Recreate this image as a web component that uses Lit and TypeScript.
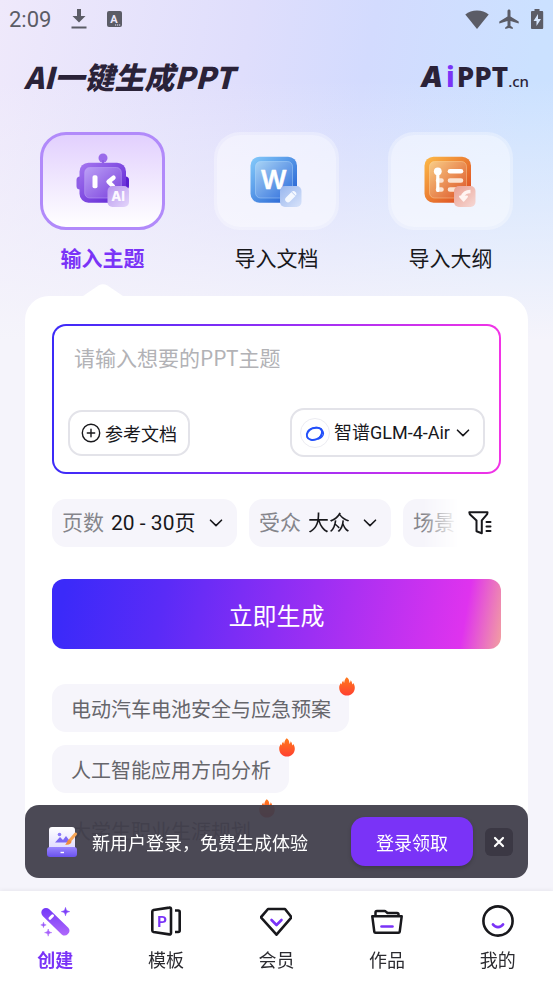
import { LitElement, html, css, svg } from "lit";
import { customElement, state } from "lit/decorators.js";
import { classMap } from "lit/directives/class-map.js";

const chevron = html`<svg class="chevron" width="14" height="8" viewBox="0 0 14 8" aria-hidden="true">
  <path d="M1.5 1.2 7 6.6l5.5-5.4" fill="none" stroke="currentColor" stroke-width="1.6" stroke-linecap="round" stroke-linejoin="round" />
</svg>`;

const flame = html`<svg class="flame" width="16" height="19" viewBox="0 0 16 19" aria-hidden="true">
  <defs>
    <linearGradient id="fl" x1="0" y1="0" x2="0" y2="1">
      <stop offset="0" stop-color="#ff7a1c" /><stop offset="1" stop-color="#ff4030" />
    </linearGradient>
  </defs>
  <path fill="url(#fl)" d="M7.700.3c1.900 1.300 2.700 3.100 2.700 5.700.8-.6 1.200-1.500 1.300-2.700 1.100 1.300 1.500 2.700 1.400 4.200.6-.3.900-.8 1-1.400C15.300 7.600 15.800 9 15.800 10.700c0 4.400-3.400 7.800-7.800 7.800S.2 15.100.2 10.700C.2 9 .8 7.500 2 6.100c0 .6.300 1.100.800 1.400C2.700 5.900 3.200 4.500 4.300 3.400c0 1.100.3 1.800.9 2.300C5.500 3.200 6.300 1.500 7.700.3Z" />
</svg>`;

const topicIcon = svg`
  <defs>
    <linearGradient id="t1" x1="0" y1="0" x2="1" y2="1"><stop offset="0" stop-color="#a678f0"/><stop offset="1" stop-color="#5a1fd2"/></linearGradient>
    <linearGradient id="t2" x1="0" y1="0" x2="1" y2="1"><stop offset="0" stop-color="#bba0f6"/><stop offset="1" stop-color="#7a40dc"/></linearGradient>
    <linearGradient id="t3" x1="0" y1="0" x2="1" y2="1"><stop offset="0" stop-color="#b795ee"/><stop offset="1" stop-color="#e4d6fb"/></linearGradient>
  </defs>
  <circle cx="28" cy="5" r="4.500" fill="#9a6bea"/>
  <rect x="27" y="7" width="2" height="4" fill="#8f5fe4"/>
  <rect x="1.500" y="23.500" width="8" height="13" rx="3.500" fill="#8f5ee6"/>
  <rect x="46" y="23.500" width="8" height="13" rx="3.500" fill="#5a1fd0"/>
  <rect x="4.500" y="9.700" width="46.500" height="40" rx="9" fill="url(#t1)"/>
  <rect x="9.700" y="14.500" width="36.600" height="30.500" rx="5" fill="url(#t2)" stroke="#c2a8f8" stroke-opacity=".5"/>
  <rect x="17.500" y="22.300" width="5" height="13" rx="1.800" fill="#fff"/>
  <path d="M38.500 24.700 33.500 28.700l4.500 4.500" fill="none" stroke="#fff" stroke-width="4.400" stroke-linecap="round" stroke-linejoin="round"/>
  <rect x="32.500" y="33" width="21.500" height="21" rx="5" fill="url(#t3)"/>
  <text x="43" y="48.300" text-anchor="middle" class="badge-text">AI</text>`;

const docIcon = svg`
  <defs>
    <linearGradient id="d1" x1="0" y1="0" x2="1" y2="1"><stop offset="0" stop-color="#86ccfb"/><stop offset="1" stop-color="#1d58cf"/></linearGradient>
    <linearGradient id="d2" x1="0" y1="0" x2="1" y2="1"><stop offset="0" stop-color="#a8d3f5"/><stop offset="1" stop-color="#2e6ddc"/></linearGradient>
    <linearGradient id="d3" x1="0" y1="0" x2="1" y2="1"><stop offset="0" stop-color="#98b6ee"/><stop offset="1" stop-color="#d8e3fa"/></linearGradient>
  </defs>
  <rect x="1.500" y="3.700" width="46.500" height="46" rx="9" fill="url(#d1)"/>
  <rect x="6.500" y="8.500" width="37" height="36.500" rx="5" fill="url(#d2)" stroke="#bfe0ff" stroke-opacity=".4"/>
  <text x="24.800" y="35.500" text-anchor="middle" class="doc-text">W</text>
  <rect x="31" y="33" width="21.500" height="21" rx="5" fill="url(#d3)"/>
  <path d="m39 46.500 5.500-5.500" stroke="#f4f8ff" stroke-width="5.600" stroke-linecap="round"/>
  <path d="m42.500 38.800 4 4" stroke="#b9cdf3" stroke-width="1"/>`;

const outlineIcon = svg`
  <defs>
    <linearGradient id="o1" x1="0" y1="0" x2="1" y2="1"><stop offset="0" stop-color="#fdbb48"/><stop offset="1" stop-color="#d9401d"/></linearGradient>
    <linearGradient id="o2" x1="0" y1="0" x2="1" y2="1"><stop offset="0" stop-color="#f8cc86"/><stop offset="1" stop-color="#dd5426"/></linearGradient>
    <linearGradient id="o3" x1="0" y1="0" x2="1" y2="1"><stop offset="0" stop-color="#ea9f90"/><stop offset="1" stop-color="#f6d9d6"/></linearGradient>
  </defs>
  <rect x="1.500" y="3.700" width="46.500" height="46" rx="9" fill="url(#o1)"/>
  <rect x="6.500" y="8.500" width="37" height="36.500" rx="5" fill="url(#o2)" stroke="#ffe0b0" stroke-opacity=".4"/>
  <path d="M15 27.500h3.500M15 36.500h3.500M27 27.500h11M27 36.500h8" stroke="#fbe3d2" stroke-width="4.600" stroke-linecap="round"/>
  <path d="M27 18.300h11" stroke="#fff" stroke-width="4.600" stroke-linecap="round"/>
  <path d="M14.800 19v18.500" stroke="#fff" stroke-width="3.200" stroke-linecap="round"/>
  <circle cx="14.800" cy="18.300" r="3.900" fill="#fff"/>
  <rect x="31" y="33" width="21.500" height="21" rx="5" fill="url(#o3)"/>
  <path d="M47.500 38.500c-4 0-7 1.500-8 5.500" fill="none" stroke="#fff4f1" stroke-width="3.400" stroke-linecap="butt"/>
  <path d="M37 43.500h7l-3.400 4.200Z" fill="#fff4f1" stroke="#fff4f1" stroke-width="2" stroke-linejoin="round"/>`;

const navIcons = {
  create: svg`
    <defs><linearGradient id="n1" gradientUnits="userSpaceOnUse" x1="0" y1="2" x2="0" y2="31"><stop offset="0" stop-color="#7136f8"/><stop offset="1" stop-color="#b069fb"/></linearGradient></defs>
    <g fill="url(#n1)" stroke="url(#n1)">
      <path d="M3.700 4.300a4.600 4.600 0 0 1 6.600 0l19 18.500a4.700 4.700 0 0 1-6.600 6.600l-19-18.500a4.600 4.600 0 0 1 0-6.600Z" stroke="none"/>
      <path d="M26.500 2.500c.5 2.800 1.300 3.600 4.100 4.100-2.800.5-3.600 1.300-4.100 4.100-.5-2.800-1.300-3.600-4.100-4.100 2.800-.5 3.600-1.300 4.100-4.100Z" stroke-width=".6"/>
      <path d="M4.500 17.200c.3 1.800.9 2.400 2.700 2.700-1.800.3-2.400.9-2.700 2.700-.3-1.800-.9-2.400-2.700-2.700 1.800-.3 2.400-.9 2.700-2.700Z" stroke-width=".5"/>
      <path d="M9.200 24c.4 2.400 1.200 3.200 3.600 3.600-2.400.4-3.200 1.200-3.600 3.600-.4-2.400-1.200-3.200-3.600-3.600 2.400-.4 3.200-1.200 3.600-3.600Z" stroke-width=".5"/>
    </g>
    <path d="m11 13.300 2.500-2.500" stroke="#fff" stroke-width="3" stroke-linecap="round"/>`,
  template: svg`
    <path d="M2.300 6.500c0-.8.500-1.300 1.300-1.500L19.300 2.600c1-.2 1.700.4 1.700 1.300v24.200c0 .9-.7 1.500-1.700 1.300L3.600 27c-.8-.2-1.300-.7-1.300-1.500ZM25 5.500h3.200c1 0 1.500.6 1.500 1.500v18.500c0 .9-.5 1.500-1.500 1.500H25" fill="none" stroke="#18181c" stroke-width="2.600" stroke-linejoin="round"/>
    <text x="12" y="21.500" text-anchor="middle" class="nav-p">P</text>`,
  member: svg`
    <path d="M8 4h17l6.500 8.300L16.500 29.700 .9 12.300Z" fill="none" stroke="#18181c" stroke-width="2.600" stroke-linejoin="round"/>
    <path d="m11.500 15 5 5 5-5" fill="none" stroke="#7a33f7" stroke-width="2.600" stroke-linecap="round" stroke-linejoin="round"/>`,
  works: svg`
    <path d="M1.300 11.300h29.400l-2 15.500c-.1.700-.5 1-1.200 1h-23c-.7 0-1.100-.3-1.200-1ZM4.500 11V7.500c0-1 .5-1.500 1.500-1.500h7.500c.6 0 1 .2 1.400.6L16.500 8H26c1 0 1.500.5 1.500 1.500V11" fill="none" stroke="#18181c" stroke-width="2.500" stroke-linejoin="round"/>
    <path d="M10.500 21.500h11" stroke="#7a33f7" stroke-width="2.600" stroke-linecap="round"/>`,
  mine: svg`
    <circle cx="16" cy="16" r="14.600" fill="none" stroke="#18181c" stroke-width="2.600"/>
    <path d="M11 19.500c2.500 3.400 7.500 3.400 10 0" fill="none" stroke="#7a33f7" stroke-width="2.800" stroke-linecap="round"/>`,
};

const TABS = [
  { id: "topic", label: "输入主题", icon: topicIcon },
  { id: "doc", label: "导入文档", icon: docIcon },
  { id: "outline", label: "导入大纲", icon: outlineIcon },
];

const FILTERS = [
  { id: "pages", name: "页数", value: "20 - 30页" },
  { id: "audience", name: "受众", value: "大众" },
  { id: "scene", name: "场景", value: "" },
];

const TOPICS = ["电动汽车电池安全与应急预案", "人工智能应用方向分析", "大学生职业生涯规划"];

const NAV = [
  { id: "create", label: "创建", icon: navIcons.create },
  { id: "template", label: "模板", icon: navIcons.template },
  { id: "member", label: "会员", icon: navIcons.member },
  { id: "works", label: "作品", icon: navIcons.works },
  { id: "mine", label: "我的", icon: navIcons.mine },
];

@customElement("app-root")
export class AppRoot extends LitElement {
  @state() private tab = "topic";
  @state() private page = "create";
  @state() private bannerOpen = true;

  static styles = css`
    :host {
      display: block;
      box-sizing: border-box;
      min-height: 100vh;
      padding-bottom: 108px;
      color: #18181c;
      font-family: Roboto, "Noto Sans CJK SC", sans-serif;
      background:
        linear-gradient(to bottom, #f5f4fb00 80px, #f5f4fb 340px),
        linear-gradient(100deg, #efe9fb 0, #dfdefc 35%, #d3dbfe 52%, #cbe1ff 75%, #cae2ff 100%);
    }
    * { box-sizing: border-box; }
    svg { display: block; flex: none; }
    button, select, textarea { font: inherit; color: inherit; margin: 0; padding: 0; border: 0; background: none; }
    button { cursor: pointer; }
    select { appearance: none; outline: none; }

    .status { display: flex; justify-content: space-between; align-items: center; height: 38px; padding: 0 8px 0 9px; color: #5b5c66; font-size: 22px; }
    .status-side { display: flex; align-items: center; gap: 19px; }
    .status-end { gap: 10px; }

    .top { display: flex; justify-content: space-between; align-items: center; height: 94px; padding: 0 24px 18px; color: #2a2238; }
    .title { margin: 0; font: italic 900 30px/40px "Noto Sans CJK SC", sans-serif; }
    .logo { display: flex; align-items: baseline; color: inherit; text-decoration: none; font: 800 28px/40px "Noto Sans", sans-serif; }
    .logo-a { font-family: Inter, sans-serif; font-style: italic; font-weight: 900; padding-right: 3px; }
    .logo-i { color: #7a33f7; padding-right: 2px; }
    .logo-cn { font: 500 15px/20px "Noto Sans", sans-serif; }

    .tabs { display: grid; grid-template-columns: repeat(3, 1fr); gap: 49px; padding: 0 40px; }
    .tab { position: relative; display: flex; flex-direction: column; align-items: stretch; gap: 16px; padding-bottom: 24px; font-size: 21px; line-height: 26px; white-space: nowrap; }
    .tab-tile { display: flex; align-items: center; justify-content: center; height: 98px; border: 3px solid #ffffff50; border-radius: 26px; background: #ffffff80; background-clip: padding-box; }
    .tab.active { color: #7a33f7; font-weight: 700; }
    .tab.active .tab-tile { border-color: #b18afa; background: linear-gradient(#e2d0fe, #fff); }
    .pointer { position: absolute; bottom: 0; left: 50%; margin-left: -20px; }
    .badge-text { font: 800 13px Inter, sans-serif; fill: #fbf8ff; }
    .doc-text { font: 600 26px Inter, sans-serif; fill: #fff; stroke: #fff; stroke-width: 0.4px; stroke-linejoin: round; }

    .card { margin: 0 25px; padding: 28px 27px 20px; border-radius: 24px; background: #fff; }
    .prompt { display: flex; flex-direction: column; justify-content: space-between; height: 150px; padding: 16px 14px 15px; border: 2px solid transparent; border-radius: 14px;
      background: linear-gradient(#fff, #fff) padding-box, linear-gradient(90deg, #3c2af8, #9b2ff5 55%, #f233e6) border-box; }
    .prompt-text { height: 30px; padding: 0 6px; font-family: "Noto Sans CJK SC", sans-serif; font-size: 21px; line-height: 30px; resize: none; outline: none; overflow: hidden; }
    .prompt-text::placeholder { color: #b2b2b6; opacity: 1; }
    .prompt-row { display: flex; align-items: center; justify-content: space-between; }
    .pill { display: flex; align-items: center; border: 2px solid #e3e3e9; border-radius: 14px; font-size: 18px; }
    .ref { gap: 4px; height: 46px; padding: 0 11px; }
    .model { height: 49px; padding: 0 13px 0 8px; }
    .model .chevron { margin-left: 6px; }
    .model-logo { display: flex; align-items: center; justify-content: center; width: 30px; height: 30px; margin-right: 4px; border: 1px solid #ececf2; border-radius: 50%; }

    .filters { display: flex; align-items: center; margin-top: 25px; }
    .filter-list { display: flex; flex: 1; gap: 12px; min-width: 0; overflow: hidden; mask-image: linear-gradient(to right, #000 calc(100% - 36px), transparent); }
    .filter { display: flex; flex: none; align-items: center; gap: 7px; height: 48px; padding: 0 14px 0 10px; border-radius: 14px; background: #f6f5fb; font-size: 21px; line-height: 30px; white-space: nowrap; }
    .filter select { height: 30px; line-height: 30px; }
    .filter-name { color: #85858b; }
    .filter .chevron { margin-left: 6px; }
    .filter-btn { display: flex; padding: 0 8px; }

    .go { display: block; width: 100%; height: 70px; margin-top: 32px; border-radius: 12px; color: #fff; font-size: 24px;
      background: linear-gradient(100deg, #3b2af9 3%, #5a2bf7 25%, #9b2ff3 58%, #df33ee 91%, #f2a0a0 100%); }

    .topics { display: flex; flex-direction: column; align-items: flex-start; gap: 13px; margin: 35px 0 0; padding: 0; list-style: none; }
    .topic { position: relative; height: 48px; padding: 0 18px 0 19px; border-radius: 14px; background: #f6f5fb; color: #66666b; font-size: 20px; }
    .topics li { display: flex; }
    .flame { position: absolute; top: -7px; right: -6px; }

    .dock { position: fixed; left: 0; right: 0; bottom: 0; }
    .banner { display: flex; align-items: center; height: 73px; margin: 0 25px 13px; padding: 0 15px 0 21px; border-radius: 14px; background: #403e4af0; color: #fff; font-size: 18px; }
    .banner-text { flex: 1; margin: 0 0 0 14px; white-space: nowrap; }
    .login { height: 49px; padding: 0 25px; border-radius: 14px; background: #7a33f7; box-shadow: 0 2px 4px #0003; white-space: nowrap; }
    .close { display: flex; align-items: center; justify-content: center; width: 28px; height: 28px; margin-left: 12px; border-radius: 6px; background: #3b3844; }
    .nav { display: grid; grid-template-columns: repeat(5, 1fr); height: 92px; padding-top: 14px; background: #fff; box-shadow: 0 -1px 4px #0000000f; }
    .nav-item { display: flex; flex-direction: column; align-items: center; gap: 12px; color: #2b2b30; font-size: 18px; line-height: 24px; text-decoration: none; }
    .nav-item.active { color: #7a33f7; font-weight: 700; }
    .nav-p { font: 700 15px Roboto, sans-serif; fill: #7a33f7; }
  `;

  private renderStatus() {
    return html`<div class="status">
      <div class="status-side">
        <span>2:09</span>
        <svg width="18" height="22" viewBox="0 0 18 22" fill="currentColor" aria-hidden="true">
          <path d="M7 1h4v7h4.500L9 14.500 2.500 8H7ZM1.500 18.500h15v2h-15Z" />
        </svg>
        <svg width="15" height="16" viewBox="0 0 15 16" aria-hidden="true">
          <rect width="15" height="16" rx="2" fill="currentColor" />
          <text x="7" y="12" text-anchor="middle" font-family="Roboto" font-size="11" font-weight="700" fill="#ece8fb">A</text>
          <path d="M8 14h1.200M10 14h1.200M12 14h1.200" stroke="#ece8fb" stroke-width="1.200" />
        </svg>
      </div>
      <div class="status-side status-end">
        <svg width="24" height="19" viewBox="0 0 24 19" fill="currentColor" aria-hidden="true"><path d="M12 19 .3 4.500C3.500 2 7.500.6 12 .6S20.500 2 23.700 4.500Z" /></svg>
        <svg width="20" height="21" viewBox="0 0 20 21" fill="currentColor" aria-hidden="true"><path d="M10 .5c.9 0 1.500.7 1.500 1.600v5.400l8.200 5v2.100l-8.200-2.600v4.700l2.300 1.700v1.700L10 19.100l-3.800 1v-1.700l2.300-1.700V12L.3 14.600v-2.100l8.200-5V2.100C8.500 1.200 9.100.5 10 .5Z" /></svg>
        <svg width="16" height="20" viewBox="0 0 16 20" aria-hidden="true"><path d="M5.500 0h5v2H13c.7 0 1.200.5 1.200 1.200v15.500c0 .7-.5 1.300-1.200 1.300H3.200c-.7 0-1.200-.6-1.200-1.300V3.200C2 2.500 2.500 2 3.200 2h2.300Z" fill="currentColor" /><path d="m9 5-4.500 7h3v5L12 10H9Z" fill="#d6e6fd" /></svg>
      </div>
    </div>`;
  }

  private renderPrompt() {
    return html`<div class="prompt">
      <textarea class="prompt-text" aria-label="PPT主题" placeholder="请输入想要的PPT主题"></textarea>
      <div class="prompt-row">
        <button class="pill ref">
          <svg width="20" height="20" viewBox="0 0 20 20" fill="none" stroke="currentColor" stroke-width="1.400" stroke-linecap="round" aria-hidden="true"><circle cx="10" cy="10" r="8.700" /><path d="M10 6.300v7.400M6.300 10h7.400" /></svg>
          参考文档
        </button>
        <label class="pill model">
          <span class="model-logo">
            <svg width="20" height="18" viewBox="0 0 20 18" fill="none" stroke="#2350fa" aria-hidden="true">
              <ellipse cx="9.500" cy="9.800" rx="8" ry="5.800" transform="rotate(-22 9.500 9.800)" stroke-width="2" />
              <path d="M2.500 8c2-4.500 11.500-6.500 14.500-2" stroke-width="1.400" />
              <path d="M16.500 5.500c4 3.500 1.500 8.500-4 9.800 3-2 4.700-5.500 4-9.800Z" stroke-width="1.200" />
            </svg>
          </span>
          <select aria-label="模型"><option>智谱GLM-4-Air</option></select>
          ${chevron}
        </label>
      </div>
    </div>`;
  }

  private renderFilters() {
    return html`<div class="filters">
      <div class="filter-list">
        ${FILTERS.map(
          (f) => html`<label class="filter">
            <span class="filter-name">${f.name}</span>
            <select name=${f.id}><option>${f.value}</option></select>
            ${chevron}
          </label>`,
        )}
      </div>
      <button class="filter-btn" aria-label="筛选">
        <svg width="26" height="26" viewBox="0 0 26 26" fill="none" stroke="currentColor" stroke-linejoin="round" stroke-linecap="round" aria-hidden="true">
          <path d="M2.300 2.300h18.200l-.3 1.800-5.400 6.200v13l-5.300-2V10.500L2.800 4.200Z" stroke-width="2" />
          <path d="M19.500 12h4M19.500 16.500h4M19.500 21h4" stroke-width="2" />
        </svg>
      </button>
    </div>`;
  }

  private renderBanner() {
    return html`<section class="banner">
      <svg width="32" height="32" viewBox="0 0 32 32" aria-hidden="true">
        <defs>
          <linearGradient id="b1" x1="0" y1="0" x2="0" y2="1"><stop offset="0" stop-color="#fff" /><stop offset="1" stop-color="#ded9ff" /></linearGradient>
          <linearGradient id="b2" x1="0" y1="0" x2="0" y2="1"><stop offset="0" stop-color="#9a86ff" /><stop offset="1" stop-color="#6a52ee" /></linearGradient>
        </defs>
        <rect x="3" y="1" width="26" height="23" rx="3" fill="url(#b1)" />
        <circle cx="13.500" cy="8.500" r="1.800" fill="#8a78f8" />
        <path d="M9 16.500 14 11l3 3 3-4 3 4v2.500Z" fill="#7d68f5" />
        <rect x="1" y="21" width="30" height="10" rx="3" fill="url(#b2)" />
        <path d="M14.500 26.500h3.500" stroke="#fff" stroke-width="1.400" />
        <path d="m29.500 8-6 7" stroke="#f7a556" stroke-width="3" stroke-linecap="round" />
        <path d="M23.500 13.500c-3 .5-2 4-4.500 5 3.500.8 6.500-.5 6.500-3Z" fill="#ef8c3c" />
      </svg>
      <p class="banner-text">新用户登录，免费生成体验</p>
      <button class="login">登录领取</button>
      <button class="close" aria-label="关闭" @click=${() => (this.bannerOpen = false)}>
        <svg width="12" height="12" viewBox="0 0 12 12" aria-hidden="true"><path d="m2 2 8 8M10 2l-8 8" stroke="#fff" stroke-width="2.200" stroke-linecap="round" /></svg>
      </button>
    </section>`;
  }

  render() {
    return html`
      ${this.renderStatus()}
      <header class="top">
        <h1 class="title">AI一键生成PPT</h1>
        <a class="logo" href="#home"><span class="logo-a">A</span><span class="logo-i">i</span><span>PPT</span><span class="logo-cn">.cn</span></a>
      </header>
      <div class="tabs">
        ${TABS.map(
          (t) => html`<button class=${classMap({ tab: true, active: t.id === this.tab })} @click=${() => (this.tab = t.id)}>
            <span class="tab-tile"><svg width="56" height="56" viewBox="0 0 56 56" aria-hidden="true">${t.icon}</svg></span>
            <span>${t.label}</span>
            ${t.id === this.tab
              ? html`<svg class="pointer" width="40" height="12" viewBox="0 0 40 12" aria-hidden="true"><path fill="#fff" d="M0 12 15.500 1.500Q20-1.200 24.500 1.500L40 12Z" /></svg>`
              : ""}
          </button>`,
        )}
      </div>
      <main class="card">
        ${this.renderPrompt()} ${this.renderFilters()}
        <button class="go">立即生成</button>
        <ul class="topics">
          ${TOPICS.map((t) => html`<li><button class="topic">${t}${flame}</button></li>`)}
        </ul>
      </main>
      <div class="dock">
        ${this.bannerOpen ? this.renderBanner() : ""}
        <nav class="nav">
          ${NAV.map(
            (n) => html`<a href="#${n.id}" class=${classMap({ "nav-item": true, active: n.id === this.page })} @click=${() => (this.page = n.id)}>
              <svg width="32" height="32" viewBox="0 0 32 32" aria-hidden="true">${n.icon}</svg>
              <span>${n.label}</span>
            </a>`,
          )}
        </nav>
      </div>
    `;
  }
}
